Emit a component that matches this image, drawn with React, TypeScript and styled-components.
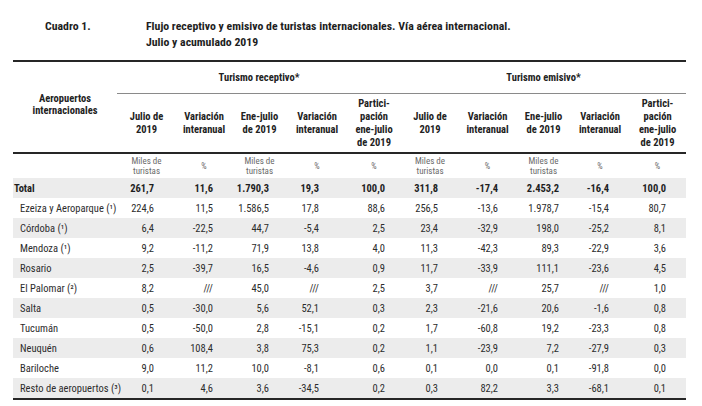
import React from "react";
import styled, { createGlobalStyle } from "styled-components";

const FONT = `Roboto, "Liberation Sans", sans-serif`;

const GlobalStyle = createGlobalStyle`
  html, body { margin: 0; padding: 0; background: #ffffff; }
  body { font-family: ${FONT}; font-stretch: 75%; color: #222; }
`;

const Page = styled.div`
  width: 702px;
  height: 406px;
  overflow: hidden;
  box-sizing: border-box;
  padding: 18px 0 0 13px;
`;

const TitleBlock = styled.div`
  display: grid;
  grid-template-columns: 101px auto;
  padding-left: 32px;
  font-weight: bold;
  font-size: 11.8px;
  line-height: 16px;
  color: #1e1e1e;
  margin-bottom: 10px;
`;

const TitleText = styled.div`
  white-space: nowrap;
`;

const Table = styled.table`
  width: 673px;
  border-collapse: collapse;
  table-layout: fixed;
  border-top: 2px solid #262626;
  border-bottom: 2px solid #262626;
`;

const GroupHead = styled.th`
  height: 31px;
  font-size: 10.5px;
  font-weight: bold;
  color: #222;
  text-align: center;
  vertical-align: middle;
  border-bottom: 1.5px solid #8a8a8a;
  padding: 0;
`;

const CornerHead = styled.th`
  font-size: 10.5px;
  line-height: 12px;
  font-weight: bold;
  color: #222;
  text-align: center;
  vertical-align: middle;
  padding: 0 0 4px 0;
`;

const ColHead = styled.th`
  height: 58px;
  font-size: 10.5px;
  line-height: 13px;
  font-weight: bold;
  color: #222;
  text-align: center;
  vertical-align: middle;
  padding: 0;
`;

const UnitRow = styled.tr`
  border-top: 2px solid #262626;
`;

const UnitCell = styled.td<{ $small?: boolean }>`
  height: 24px;
  padding: 0;
  text-align: center;
  vertical-align: middle;
  color: #6a6a6a;
  font-size: ${(p) => (p.$small ? "8.5px" : "9px")};
  line-height: 10px;
`;

const BodyRow = styled.tr<{ $shaded: boolean }>`
  background: ${(p) => (p.$shaded ? "#ececec" : "#ffffff")};
`;

const LabelCell = styled.td<{ $total?: boolean }>`
  height: 20px;
  padding: 0 0 0 ${(p) => (p.$total ? "1px" : "7px")};
  font-size: 10.5px;
  font-weight: ${(p) => (p.$total ? "bold" : "normal")};
  color: ${(p) => (p.$total ? "#1e1e1e" : "#2c2c2c")};
  white-space: nowrap;
  vertical-align: middle;
`;

const ValueCell = styled.td<{ $total?: boolean; $pad: number }>`
  height: 20px;
  padding: 0 ${(p) => p.$pad}px 0 0;
  text-align: right;
  font-size: 10.5px;
  font-weight: ${(p) => (p.$total ? "bold" : "normal")};
  color: ${(p) => (p.$total ? "#1e1e1e" : "#2c2c2c")};
  white-space: nowrap;
  vertical-align: middle;
`;

const widths = [104, 59, 56, 55, 60, 54, 58, 57, 55, 58, 57];
const pads = [22, 19, 18, 28, 16, 21, 18, 12, 20, 20];

const colHeads: string[][] = [
  ["Julio de", "2019"],
  ["Variación", "interanual"],
  ["Ene-julio", "de 2019"],
  ["Variación", "interanual"],
  ["Partici-", "pación", "ene-julio", "de 2019"],
];

const units: { text: string[]; small?: boolean }[] = [
  { text: ["Miles de", "turistas"] },
  { text: ["%"], small: true },
  { text: ["Miles de", "turistas"] },
  { text: ["%"], small: true },
  { text: ["%"], small: true },
];

type Row = { label: string; values: string[]; total?: boolean };

const rows: Row[] = [
  { label: "Total", total: true, values: ["261,7", "11,6", "1.790,3", "19,3", "100,0", "311,8", "-17,4", "2.453,2", "-16,4", "100,0"] },
  { label: "Ezeiza y Aeroparque (¹)", values: ["224,6", "11,5", "1.586,5", "17,8", "88,6", "256,5", "-13,6", "1.978,7", "-15,4", "80,7"] },
  { label: "Córdoba (¹)", values: ["6,4", "-22,5", "44,7", "-5,4", "2,5", "23,4", "-32,9", "198,0", "-25,2", "8,1"] },
  { label: "Mendoza (¹)", values: ["9,2", "-11,2", "71,9", "13,8", "4,0", "11,3", "-42,3", "89,3", "-22,9", "3,6"] },
  { label: "Rosario", values: ["2,5", "-39,7", "16,5", "-4,6", "0,9", "11,7", "-33,9", "111,1", "-23,6", "4,5"] },
  { label: "El Palomar (²)", values: ["8,2", "///", "45,0", "///", "2,5", "3,7", "///", "25,7", "///", "1,0"] },
  { label: "Salta", values: ["0,5", "-30,0", "5,6", "52,1", "0,3", "2,3", "-21,6", "20,6", "-1,6", "0,8"] },
  { label: "Tucumán", values: ["0,5", "-50,0", "2,8", "-15,1", "0,2", "1,7", "-60,8", "19,2", "-23,3", "0,8"] },
  { label: "Neuquén", values: ["0,6", "108,4", "3,8", "75,3", "0,2", "1,1", "-23,9", "7,2", "-27,9", "0,3"] },
  { label: "Bariloche", values: ["9,0", "11,2", "10,0", "-8,1", "0,6", "0,1", "0,0", "0,1", "-91,8", "0,0"] },
  { label: "Resto de aeropuertos (³)", values: ["0,1", "4,6", "3,6", "-34,5", "0,2", "0,3", "82,2", "3,3", "-68,1", "0,1"] },
];

const Lines = ({ lines }: { lines: string[] }) => (
  <>
    {lines.map((l, i) => (
      <React.Fragment key={i}>
        {i > 0 && <br />}
        {l}
      </React.Fragment>
    ))}
  </>
);

export default function App() {
  const heads = [...colHeads, ...colHeads];
  const unitCells = [...units, ...units];
  return (
    <>
      <GlobalStyle />
      <Page>
        <TitleBlock>
          <TitleText>Cuadro 1.</TitleText>
          <TitleText>
            Flujo receptivo y emisivo de turistas internacionales. Vía aérea internacional.
            <br />
            Julio y acumulado 2019
          </TitleText>
        </TitleBlock>
        <Table>
          <colgroup>
            {widths.map((w, i) => (
              <col key={i} style={{ width: w }} />
            ))}
          </colgroup>
          <thead>
            <tr>
              <CornerHead rowSpan={2}>
                Aeropuertos
                <br />
                internacionales
              </CornerHead>
              <GroupHead colSpan={5}>Turismo receptivo*</GroupHead>
              <GroupHead colSpan={5}>Turismo emisivo*</GroupHead>
            </tr>
            <tr>
              {heads.map((h, i) => (
                <ColHead key={i}>
                  <Lines lines={h} />
                </ColHead>
              ))}
            </tr>
          </thead>
          <tbody>
            <UnitRow>
              <UnitCell />
              {unitCells.map((u, i) => (
                <UnitCell key={i} $small={u.small}>
                  <Lines lines={u.text} />
                </UnitCell>
              ))}
            </UnitRow>
            {rows.map((r, ri) => (
              <BodyRow key={ri} $shaded={ri % 2 === 0}>
                <LabelCell $total={r.total}>{r.label}</LabelCell>
                {r.values.map((v, vi) => (
                  <ValueCell key={vi} $total={r.total} $pad={pads[vi]}>
                    {v}
                  </ValueCell>
                ))}
              </BodyRow>
            ))}
          </tbody>
        </Table>
      </Page>
    </>
  );
}
